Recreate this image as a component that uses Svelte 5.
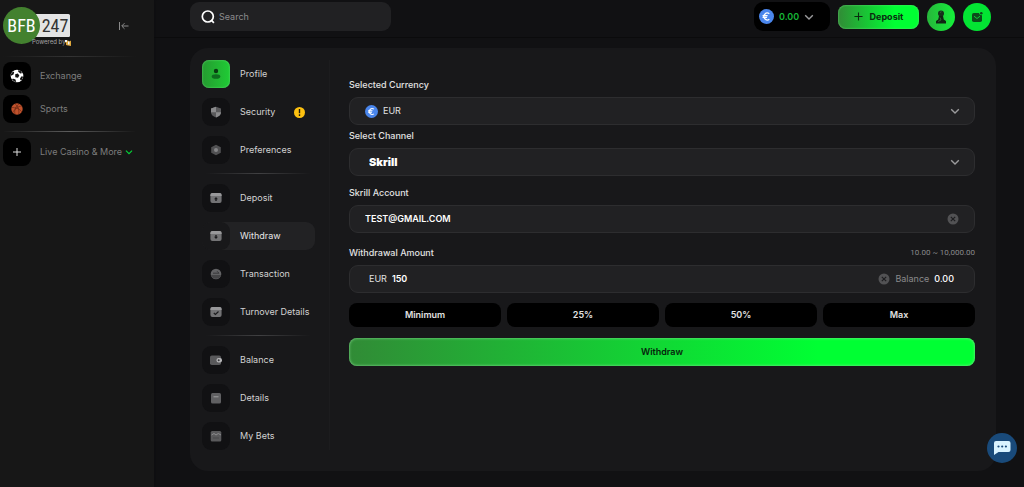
<script>
  //Variables
  let currency = 'EUR';
  let channel = 'Skrill';
  let account = 'TEST@GMAIL.COM';
  let amount = '150';
  let search = '';

  let menuGroups = [
    [
      { name: 'Profile', icon: 'person' },
      { name: 'Security', icon: 'shield', alert: true },
      { name: 'Preferences', icon: 'hex' }
    ],
    [
      { name: 'Deposit', icon: 'down' },
      { name: 'Withdraw', icon: 'up', active: true },
      { name: 'Transaction', icon: 'swap' },
      { name: 'Turnover Details', icon: 'check' }
    ],
    [
      { name: 'Balance', icon: 'wallet' },
      { name: 'Details', icon: 'list' },
      { name: 'My Bets', icon: 'bets' }
    ]
  ];

  let quickAmounts = ['Minimum', '25%', '50%', 'Max'];
</script>

{#snippet euro()}
  <svg class="euro" viewBox="0 0 16 16" aria-hidden="true">
    <circle cx="8" cy="8" r="8" fill="#4a86ec" />
    <path d="M11 5.1A3.6 3.6 0 1 0 11 10.9M3.8 7.1h5.4M3.8 9h4.8" fill="none" stroke="#fff" stroke-width="1.3" />
  </svg>
{/snippet}

{#snippet chevron()}
  <svg class="chevron" viewBox="0 0 10 10" aria-hidden="true">
    <path d="M1.2 3.2L5 7l3.8-3.8" fill="none" stroke="currentColor" stroke-width="1.4" />
  </svg>
{/snippet}

{#snippet clear()}
  <svg class="clear-icon" viewBox="0 0 12 12" aria-hidden="true">
    <circle cx="6" cy="6" r="5.5" fill="#525254" />
    <path d="M3.8 3.8l4.4 4.4M8.2 3.8L3.8 8.2" stroke="#1e1e20" stroke-width="1.2" />
  </svg>
{/snippet}

<div class="page">
  <!--Left sidebar-->
  <aside class="sidebar">
    <div class="brand">
      <svg class="logo" viewBox="0 0 72 42" role="img" aria-label="BFB 247">
        <rect x="26" y="9" width="41" height="23" rx="1.5" fill="#e4e4e4" />
        <circle cx="18.5" cy="20.500" r="18.500" fill="#43812f" />
        <text x="18.5" y="27" class="logo-bfb" text-anchor="middle">BFB</text>
        <text x="52" y="27" class="logo-num" text-anchor="middle">247</text>
        <text x="29" y="39" class="logo-by">Powered by</text>
        <path d="M62 35.500h3l1.500 1 1.500-1v5.500l-3-.5-2-.5v-2l-1-1z" fill="#dfa83c" />
        <path d="M62 35h2v2h-2zM65 36.500h1.500v3H65z" fill="#f2f2f2" />
      </svg>
      <button class="collapse" aria-label="Collapse menu">
        <svg viewBox="0 0 12 10" width="12" height="10">
          <path d="M1.500 1v8M10.500 5H4M6.500 2.200L3.700 5l2.800 2.800" fill="none" stroke="#8a8a8a" stroke-width="1" />
        </svg>
      </button>
    </div>
    <hr />
    <nav class="side-nav">
      <a href="#exchange">
        <span class="tile">
          <svg viewBox="0 0 14 14" width="14" height="14">
            <circle cx="7" cy="7" r="6.300" fill="#fff" />
            <path d="M5.200 5.200l2.600-.7 1.500 2-1.300 2.300-2.700-.5zM1 5l2-2.600 1.200.8-.7 2.200L1 6.800zM8.500.9l3 1.500.3 1.900-1.500.2-2.200-1.900zM11.600 7.300l1.600.4-1.500 3.300-1.300.2-.4-1.800zM3.500 9.800l2 .6.700 2.500-2.200-.5L1.800 10z" fill="#111" />
          </svg>
        </span>
        Exchange
      </a>
      <a href="#sports">
        <span class="tile">
          <svg viewBox="0 0 14 14" width="14" height="14">
            <circle cx="7" cy="7" r="5.700" fill="#c0522c" />
            <path d="M1.500 5.500c4 0 8 1 10.500 4.500M5 1.700c3 2.500 4.500 6 3.700 10.800M2.600 10.800C4 8 7.500 4 12 4M9 1.800C5.500 4.500 4 8 5 12.400" fill="none" stroke="#4e1d0e" stroke-width=".5" />
          </svg>
        </span>
        Sports
      </a>
    </nav>
    <hr class="bright" />
    <nav class="side-nav">
      <a href="#more">
        <span class="tile">
          <svg viewBox="0 0 10 10" width="10" height="10">
            <path d="M5 1v8M1 5h8" stroke="#ddd" stroke-width="1" />
          </svg>
        </span>
        Live Casino &amp; More
        <span class="green">{@render chevron()}</span>
      </a>
    </nav>
  </aside>

  <div class="main">
    <!--Top bar-->
    <header>
      <label class="search">
        <svg viewBox="0 0 14 14" width="14" height="14" aria-hidden="true">
          <circle cx="6.800" cy="6.500" r="5.500" fill="none" stroke="#fff" stroke-width="1.700" />
          <path d="M10.300 10.200l2.600 2.600" stroke="#fff" stroke-width="1.700" />
        </svg>
        <input type="text" placeholder="Search" aria-label="Search" bind:value={search} />
      </label>
      <div class="actions">
        <button class="balance">
          {@render euro()}
          <span>0.00</span>
          {@render chevron()}
        </button>
        <button class="deposit">
          <svg viewBox="0 0 10 10" width="9" height="9" aria-hidden="true">
            <path d="M5 .5v9M.5 5h9" stroke="#0b2a10" stroke-width="1.200" />
          </svg>
          Deposit
        </button>
        <button class="round user" aria-label="Account">
          <svg viewBox="0 0 14 16" width="14" height="16">
            <circle cx="7" cy="4.500" r="3" fill="#16311a" />
            <path d="M5 7h4l.8 3.500 2.200 1.500v2.500H2V12l2.200-1.500z" fill="#102413" />
            <path d="M6 3.500l1.500-.8M6 8.500l1 2.500-3 1.500" stroke="#3e6a43" stroke-width=".8" fill="none" />
          </svg>
        </button>
        <button class="round mail" aria-label="Messages">
          <svg viewBox="0 0 12 12" width="12" height="12">
            <rect x="1" y="2" width="10" height="9" rx="1.800" fill="#0d4a1b" />
            <path d="M3 5.200l3 2.300 3-2.300" fill="none" stroke="#0fd83a" stroke-width=".9" />
            <circle cx="10.300" cy="2.300" r="2" fill="#06e535" />
            <circle cx="10.300" cy="2.300" r="1.300" fill="#0d4a1b" />
          </svg>
        </button>
      </div>
    </header>

    <!--Account panel-->
    <main class="panel">
      <nav class="menu">
        {#each menuGroups as group}
          <div class="group">
            {#each group as item}
              <a href="#{item.icon}" class:active={item.active}>
                <span class="menu-icon" class:first={item.icon == 'person'}>
                  <svg viewBox="0 0 12 12" width="12" height="12" fill="#737375">
                    {#if item.icon == 'person'}
                      <circle cx="6" cy="3" r="2.200" fill="#0a3a12" />
                      <ellipse cx="6" cy="8.500" rx="4.300" ry="2.300" fill="#0d6b1e" />
                    {:else if item.icon == 'shield'}
                      <path d="M6 .8l5 1.700v3.700c0 2.500-2 4.200-5 5.200-3-1-5-2.700-5-5.200V2.500z" fill="#59595b" />
                      <path d="M6 .8v5.400H1V2.500zM6 6.200h5c0 2.500-2 4.200-5 5.200z" fill="#8a8a8c" />
                    {:else if item.icon == 'hex'}
                      <path d="M6 .7l4.800 2.600v5.400L6 11.300 1.200 8.700V3.300z" fill="#505052" />
                      <circle cx="6" cy="6" r="2" fill="#868688" />
                    {:else if item.icon == 'swap'}
                      <circle cx="6" cy="6" r="5.300" fill="#626264" />
                      <path d="M1 7h10a5.200 5.200 0 0 1-10 0z" fill="#454547" />
                      <path d="M3 5.200h6L7 3.200" stroke="#39393b" fill="none" />
                    {:else if item.icon == 'wallet'}
                      <rect x="0" y="1.500" width="11" height="9.500" rx="1.800" fill="#59595b" />
                      <rect x="6.500" y="4" width="5.500" height="4.500" rx="2" fill="#b5b5b7" />
                      <circle cx="8.700" cy="6.200" r="1" fill="#39393b" />
                    {:else if item.icon == 'list'}
                      <rect x="1" y="1" width="10" height="10.500" rx="1.500" fill="#606062" />
                      <path d="M3.500 4.800h5" stroke="#a0a0a2" />
                    {:else if item.icon == 'bets'}
                      <rect x=".7" y="1" width="10.600" height="10.500" rx="1.500" fill="#59595b" />
                      <path d="M1.500 5l2.500-1.500L6 5l2.300-1.500L11 5" stroke="#8c8c8e" fill="none" />
                      <path d="M3 8h6" stroke="#48484a" />
                    {:else}
                      <rect x=".4" y="1" width="11.200" height="10" rx="2" />
                      <path d="M2.400 1h7.200a2 2 0 0 1 2 2v1H.4V3a2 2 0 0 1 2-2z" fill="#98989a" />
                      {#if item.icon == 'down'}
                        <path d="M6 5l2 2.200H6.700V9H5.300V7.200H4z" fill="#1c1c1e" />
                      {:else if item.icon == 'up'}
                        <path d="M6 9l2-2.200H6.700V5H5.300v1.800H4z" fill="#1c1c1e" />
                      {:else}
                        <path d="M3.800 7l1.600 1.500L8.500 5.500" stroke="#1c1c1e" stroke-width="1.200" fill="none" />
                      {/if}
                    {/if}
                  </svg>
                </span>
                <span class="menu-name">{item.name}</span>
                {#if item.alert}
                  <svg class="alert" viewBox="0 0 12 12" width="11" height="11" role="img" aria-label="Attention">
                    <circle cx="6" cy="6" r="6" fill="#fdc110" />
                    <path d="M6 2.300v4.400M6 8v1.700" stroke="#1c1a10" stroke-width="1.500" />
                  </svg>
                {/if}
              </a>
            {/each}
          </div>
        {/each}
      </nav>

      <form class="withdraw-form" on:submit|preventDefault>
        <div class="row">
          <label for="currency">Selected Currency</label>
          <div class="field select">
            {@render euro()}
            <select id="currency" bind:value={currency}>
              <option>EUR</option>
            </select>
            {@render chevron()}
          </div>
        </div>
        <div class="row">
          <label for="channel">Select Channel</label>
          <div class="field select inset">
            <select id="channel" class="skrill" bind:value={channel}>
              <option>Skrill</option>
            </select>
            {@render chevron()}
          </div>
        </div>
        <div class="row spaced">
          <label for="account">Skrill Account</label>
          <div class="field">
            <input id="account" type="text" bind:value={account} />
            <button type="button" class="clear" aria-label="Clear account" on:click={() => (account = '')}>{@render clear()}</button>
          </div>
        </div>
        <div class="row spaced">
          <div class="label-line">
            <label for="amount">Withdrawal Amount</label>
            <span class="range">10.00 ~ 10,000.00</span>
          </div>
          <div class="field inset">
            <span>EUR</span>
            <input id="amount" type="text" bind:value={amount} />
            <button type="button" class="clear" aria-label="Clear amount" on:click={() => (amount = '')}>{@render clear()}</button>
            <span class="muted">Balance</span>
            <span class="white">0.00</span>
          </div>
        </div>
        <div class="quick">
          {#each quickAmounts as quick}
            <button type="button">{quick}</button>
          {/each}
        </div>
        <button class="submit">Withdraw</button>
      </form>
    </main>
  </div>

  <button class="chat" aria-label="Chat">
    <svg viewBox="0 0 18 16" width="18" height="16">
      <path d="M3 1h12.500A2 2 0 0 1 17.500 3v7a2 2 0 0 1-2 2H5.500L1 15V3a2 2 0 0 1 2-2z" fill="#d9f3ff" />
      <circle cx="5.500" cy="6.500" r="1.100" fill="#194a7a" />
      <circle cx="9.200" cy="6.500" r="1.100" fill="#194a7a" />
      <circle cx="12.900" cy="6.500" r="1.100" fill="#194a7a" />
    </svg>
  </button>
</div>

<style>
  :global(body) {
    background: #111113;
  }

  .page {
    display: flex;
    min-height: 100vh;
    color: #d2d2d2;
    font-family: Inter, "Liberation Sans", sans-serif;
    font-size: 9px;
    line-height: 12px;
  }

  .page * {
    box-sizing: border-box;
  }

  button, input, select {
    font: inherit;
    color: inherit;
    border: 0;
    padding: 0;
    margin: 0;
    background: none;
    outline: none;
  }

  button {
    cursor: pointer;
  }

  a {
    color: inherit;
    text-decoration: none;
  }

  svg {
    flex: none;
    display: block;
  }

  /* sidebar */
  .sidebar {
    flex: none;
    width: 154px;
    background: #171717;
    box-shadow: 0 0 4px #0c0c0d;
    color: #7d7d7d;
  }

  .brand {
    display: flex;
    justify-content: space-between;
    align-items: center;
    height: 56px;
    padding: 0 24px 4px 3px;
  }

  .logo {
    width: 72px;
    height: 42px;
  }

  .logo-bfb, .logo-num {
    font-family: "Roboto Condensed", "Liberation Sans Narrow", "DejaVu Sans Condensed", sans-serif;
    font-size: 18px;
    fill: #fff;
  }

  .logo-num {
    fill: #333;
  }

  .logo-by {
    font-size: 6px;
    fill: #a5a5a5;
  }

  hr {
    height: 1px;
    margin: 0 18px 0 3px;
    border: 0;
    background: linear-gradient(90deg, transparent, #333 50%, transparent);
  }

  hr.bright {
    background: linear-gradient(90deg, transparent, #5c5c5c 50%, transparent);
  }

  .side-nav {
    display: flex;
    flex-direction: column;
    gap: 5px;
    padding: 5px 3px 8px;
  }

  .bright + .side-nav {
    padding-top: 6px;
  }

  .side-nav a {
    display: flex;
    align-items: center;
  }

  .tile {
    display: grid;
    place-items: center;
    width: 28px;
    height: 28px;
    margin-right: 9px;
    border-radius: 8px;
    background: #000;
  }

  .green {
    margin-left: 3px;
    color: #06d438;
  }

  .green .chevron {
    width: 8px;
    height: 8px;
  }

  /* header */
  .main {
    flex: 1;
    min-width: 0;
  }

  header {
    display: flex;
    justify-content: space-between;
    height: 38px;
    padding: 2px 33px 0 36px;
    border-bottom: 1px solid #0b0b0c;
  }

  .search {
    display: flex;
    align-items: center;
    gap: 4px;
    width: 201px;
    height: 29px;
    padding-left: 11px;
    border-radius: 9px;
    background: #212123;
  }

  .search input {
    flex: 1;
    min-width: 0;
  }

  .search input::placeholder {
    color: #8c8c8e;
    opacity: 1;
  }

  .actions {
    display: flex;
    align-items: center;
    gap: 8px;
    height: 29px;
  }

  .balance {
    display: flex;
    align-items: center;
    gap: 5px;
    width: 76px;
    height: 29px;
    padding-left: 5px;
    border-radius: 9px;
    background: #000;
    color: #16b536;
    font-weight: 600;
  }

  .euro {
    width: 15px;
    height: 15px;
  }

  .chevron {
    width: 10px;
    height: 10px;
    color: #9b9b9d;
  }

  .green .chevron {
    color: inherit;
  }

  .deposit {
    display: flex;
    align-items: center;
    justify-content: center;
    gap: 7px;
    width: 81px;
    height: 24px;
    border-radius: 8px;
    background: linear-gradient(90deg, #318b36, #00ff33 70%);
    box-shadow: inset 0 0 2px #6fdc7e;
    color: #0b2a10;
    font-weight: 700;
  }

  .round {
    display: grid;
    place-items: center;
    width: 28px;
    height: 28px;
    border-radius: 50%;
    background: #03e433;
  }

  .user {
    background: linear-gradient(90deg, #27b63b, #14f03a);
  }

  /* panel */
  .panel {
    display: flex;
    margin: 10px 28px 16px 36px;
    padding: 12px 21px 21px 12px;
    border-radius: 18px;
    background: #18181a;
  }

  .menu {
    flex: none;
    width: 128px;
    padding-right: 14px;
    border-right: 1px solid #1c1c1e;
  }

  .group {
    display: flex;
    flex-direction: column;
    gap: 10px;
  }

  .group + .group::before {
    content: "";
    height: 1px;
    margin: 9px 4px 0;
    background: linear-gradient(90deg, transparent, #404042 50%, transparent);
  }

  .menu a {
    display: flex;
    align-items: center;
    height: 28px;
    border-radius: 9px;
  }

  .menu a.active {
    background: #222224;
    color: #e6e6e6;
  }

  .menu-icon {
    display: grid;
    place-items: center;
    width: 28px;
    height: 28px;
    margin-right: 10px;
    border-radius: 9px;
    background: #111113;
  }

  .active .menu-icon {
    background: #18181a;
  }

  .menu-icon.first {
    background: linear-gradient(90deg, #259a30, #1fcc35);
    box-shadow: inset 0 0 2px #6fdc7e;
    border-radius: 7px;
  }

  .menu-name {
    white-space: nowrap;
  }

  .alert {
    margin-left: auto;
    margin-right: 10px;
  }

  .withdraw-form {
    flex: 1;
    min-width: 0;
    padding: 19px 0 0 19px;
    color: #e2e2e2;
  }

  .row label {
    display: block;
    font-weight: 500;
  }

  .row {
    margin-bottom: 5px;
  }

  .row.spaced {
    padding-top: 6px;
    margin-bottom: 8px;
  }

  .label-line {
    display: flex;
    justify-content: space-between;
  }

  .range {
    color: #8a8a8c;
    font-family: Roboto, sans-serif;
    font-size: 8px;
  }

  .field {
    display: flex;
    align-items: center;
    gap: 5px;
    height: 28px;
    margin-top: 6px;
    padding: 0 15px;
    border: 1px solid #2d2d2f;
    border-radius: 9px;
    background: #212123;
  }

  .field.inset {
    padding: 0 20px 0 19px;
  }

  .field.select {
    padding-right: 14px;
  }

  .field select, .field input {
    flex: 1;
    min-width: 0;
    appearance: none;
  }

  .field .euro {
    width: 13px;
    height: 13px;
  }

  .field input {
    color: #fff;
    font-weight: 600;
  }

  .field .skrill {
    color: #fff;
    font-size: 11px;
    font-weight: 900;
  }

  .clear-icon {
    width: 12px;
    height: 12px;
  }

  .muted {
    color: #8a8a8c;
  }

  .white {
    color: #fff;
    font-weight: 500;
  }

  .quick {
    display: grid;
    grid-template-columns: repeat(4, 1fr);
    gap: 6px;
    margin: 10px 0 11px;
  }

  .quick button {
    height: 24px;
    border-radius: 8px;
    background: #000;
    font-weight: 600;
  }

  .submit {
    display: block;
    width: 100%;
    height: 28px;
    border-radius: 8px;
    background: linear-gradient(90deg, #318b36, #00ff33 75%);
    box-shadow: inset 0 0 3px #8be096;
    color: #06240c;
    font-weight: 600;
  }

  .chat {
    display: grid;
    place-items: center;
    position: fixed;
    right: 7px;
    bottom: 24px;
    width: 30px;
    height: 30px;
    border-radius: 50%;
    background: #194a7a;
  }
</style>
